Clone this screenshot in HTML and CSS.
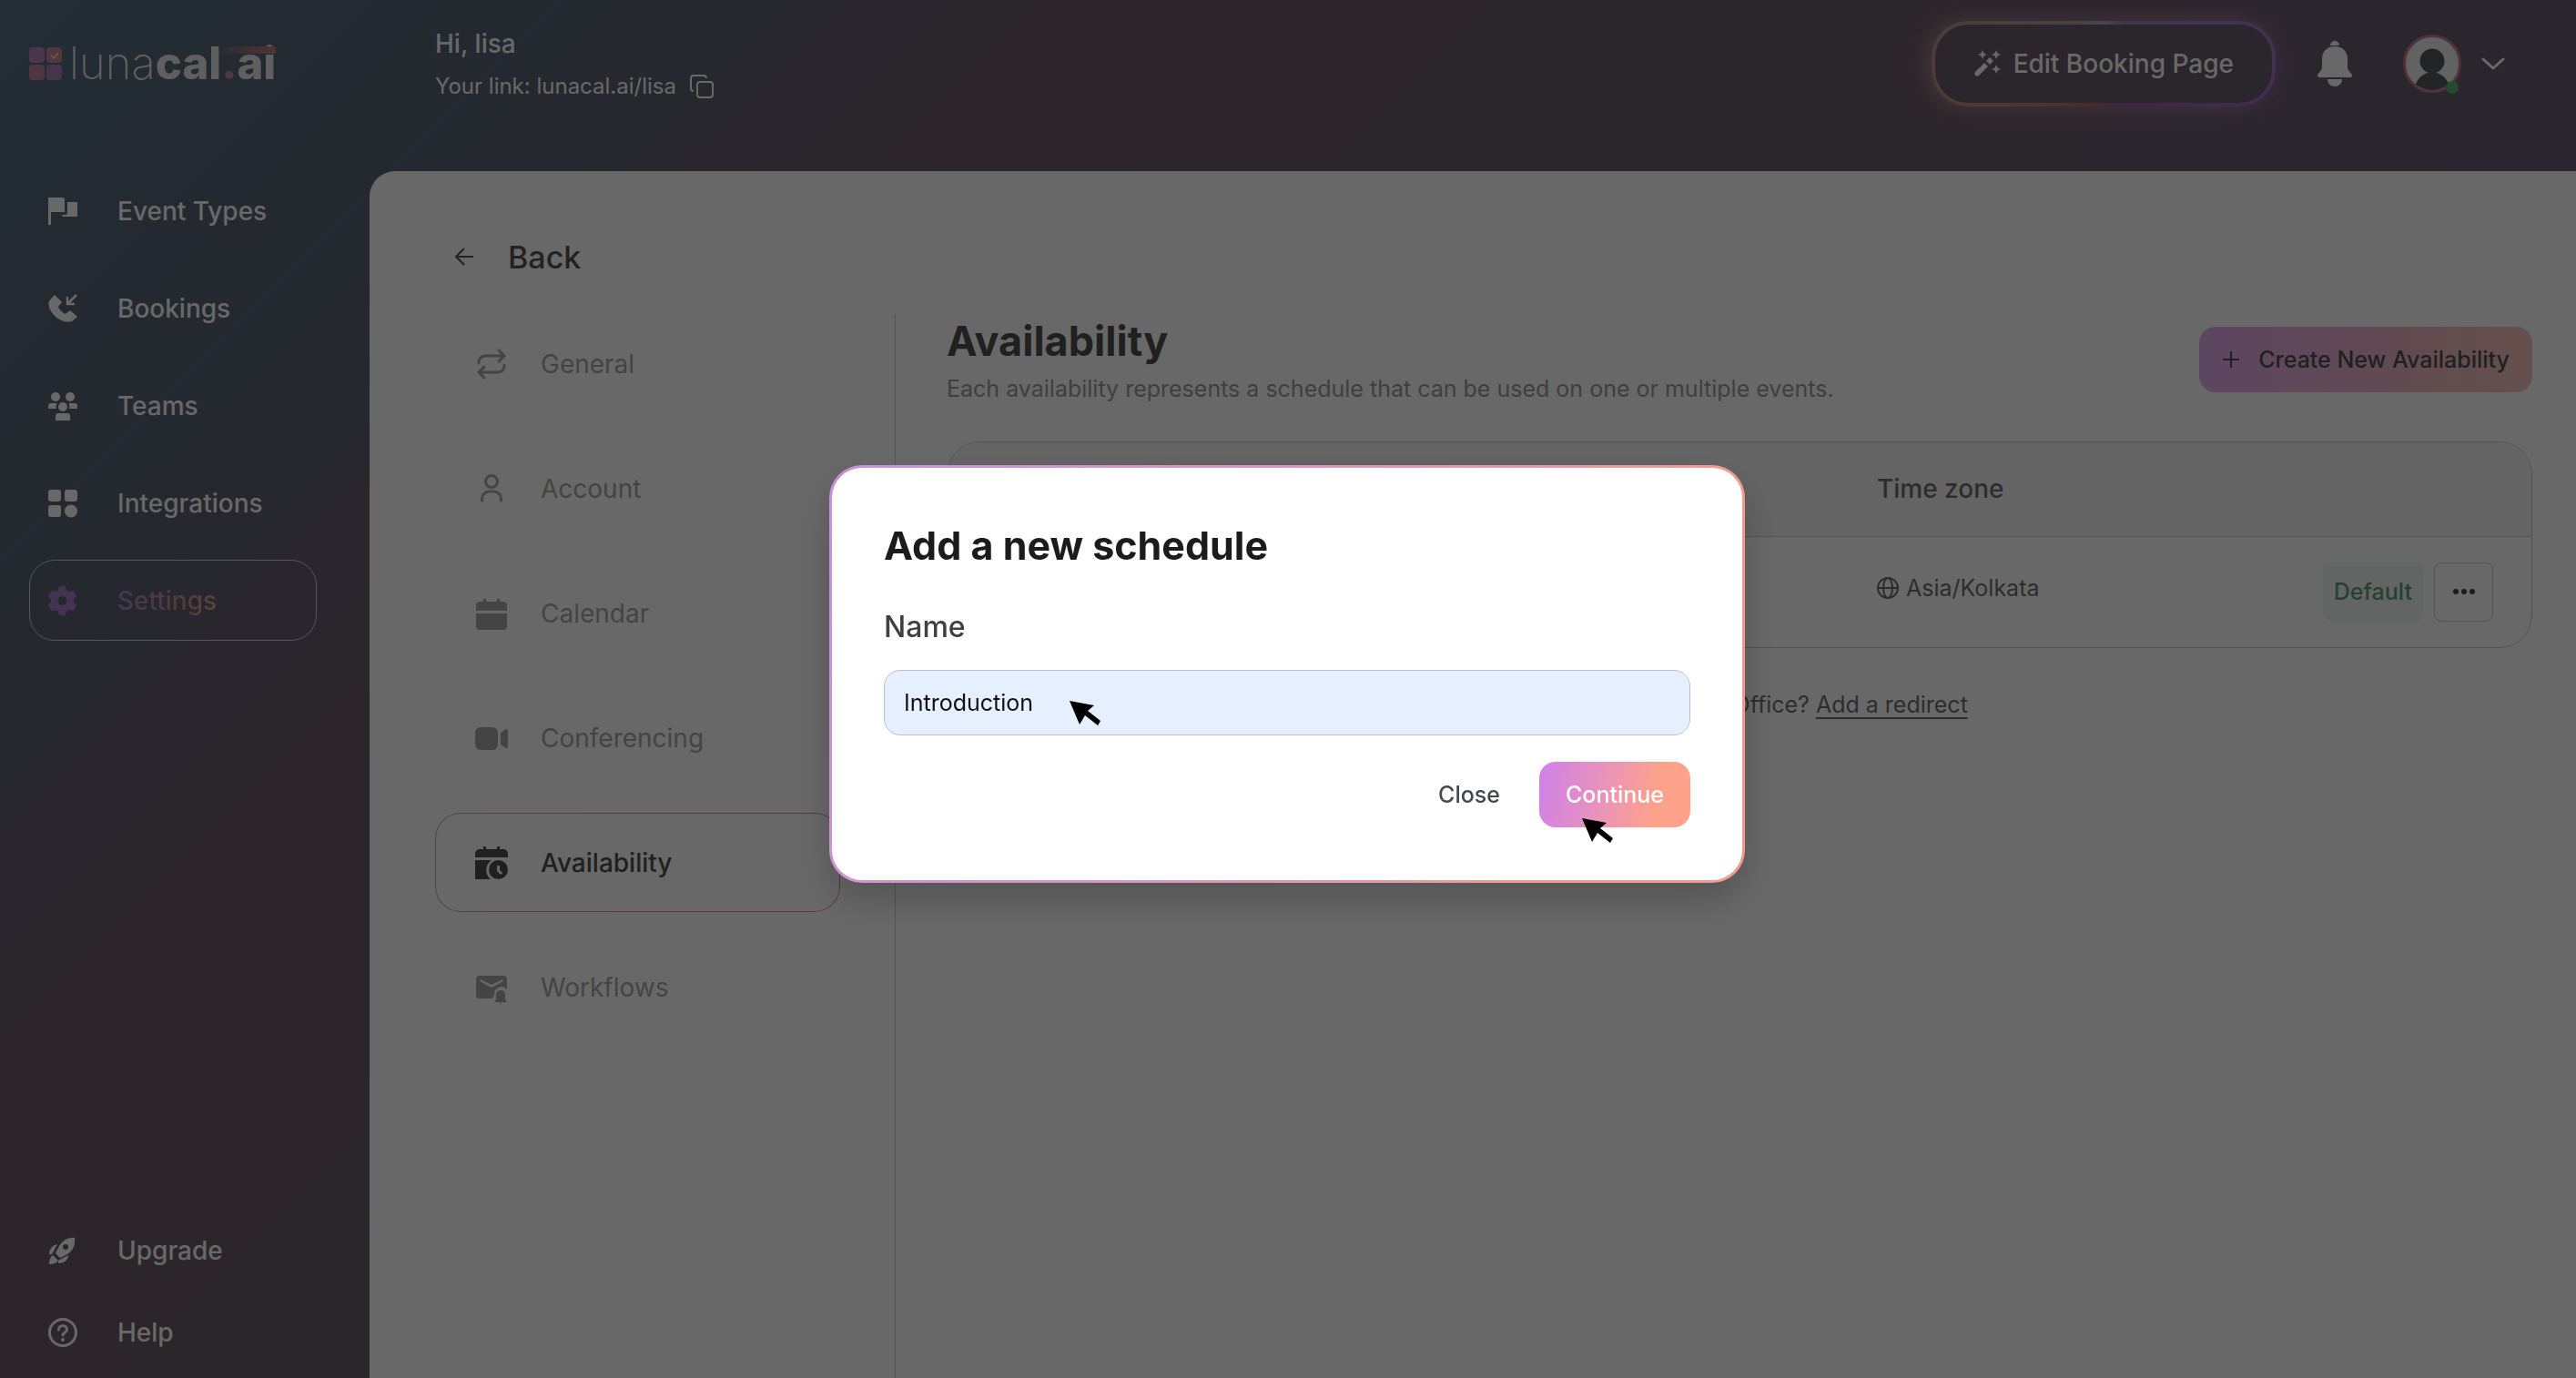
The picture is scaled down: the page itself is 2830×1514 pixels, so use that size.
FILE: index.html
```html
<!DOCTYPE html>
<html lang="en">
<head>
<meta charset="utf-8">
<title>Availability - lunacal.ai</title>
<meta name="viewport" content="width=device-width, initial-scale=1">
<link rel="stylesheet" href="styles.css">
</head>
<body>
<div class="app">
  <aside class="sidebar">
    <a class="logo" href="#" aria-label="lunacal.ai">
      <svg class="logo-mark" viewBox="0 0 36 36" aria-hidden="true">
        <rect x="0" y="0" width="17" height="17" rx="4" fill="#b985b8"/>
        <rect x="19" y="0" width="17" height="17" rx="4" fill="#c98a92"/>
        <rect x="0" y="19" width="17" height="17" rx="4" fill="#bf86a4"/>
        <rect x="19" y="19" width="17" height="17" rx="4" fill="#ad7fbd"/>
        <path d="M24 8.500l3 3.500 5-6" fill="none" stroke="#f0dce0" stroke-width="1.500"/>
      </svg>
      <span class="logo-text"><span class="logo-thin">luna</span><span class="logo-bold">cal<span class="logo-dot">.</span>ai</span><span class="logo-bar"></span></span>
    </a>
    <nav class="nav">
      <a class="nav-item" href="#">
        <svg class="nav-icon" viewBox="0 0 32 32" aria-hidden="true"><path d="M0 1h15a3 3 0 0 1 3 3v13H3v14H0z"/><path d="M21 6h11v16H17a2 2 0 0 1-2-2h4a2 2 0 0 0 2-2z"/></svg>
        Event Types</a>
      <a class="nav-item" href="#">
        <svg class="nav-icon" viewBox="0 0 32 32" aria-hidden="true"><path d="M7 1 1.500 7C-1 11 1 18 7 24s14 8 19 6l6-5-8-7-5 4c-3-1-7-5-8-8l4-5z"/><path d="M31 1 21 11M21 3v8h8" fill="none" stroke="currentColor" stroke-width="2.500"/></svg>
        Bookings</a>
      <a class="nav-item" href="#">
        <svg class="nav-icon" viewBox="0 0 32 32" aria-hidden="true"><circle cx="8" cy="6" r="5"/><circle cx="24" cy="6" r="5"/><circle cx="16" cy="17" r="5"/><path d="M3 13h6.500a7 7 0 0 0-.5 6H0v-3a3 3 0 0 1 3-3zM29 13h-6.500a7 7 0 0 1 .5 6h9v-3a3 3 0 0 0-3-3zM11 24h10a3 3 0 0 1 3 3v5H8v-5a3 3 0 0 1 3-3z"/></svg>
        Teams</a>
      <a class="nav-item" href="#">
        <svg class="nav-icon" viewBox="0 0 32 32" aria-hidden="true"><rect x="0" y="1" width="14" height="13" rx="3"/><rect x="18" y="1" width="14" height="13" rx="3"/><rect x="0" y="18" width="14" height="13" rx="3"/><circle cx="25" cy="24.500" r="7"/></svg>
        Integrations</a>
      <a class="nav-item nav-item-active" href="#">
        <svg class="nav-icon" viewBox="0 0 32 32" aria-hidden="true"><path fill-rule="evenodd" stroke="currentColor" stroke-width="2" stroke-linejoin="round" d="M13 1h5l1 4 4 2 4-1 3 5-3 3v4l3 3-3 5-4-1-4 2-1 4h-5l-1-4-4-2-4 1-3-5 3-3v-4l-3-3 3-5 4 1 4-2zM15.500 10a6 6 0 1 0 0 12 6 6 0 0 0 0-12z"/></svg>
        <span>Settings</span></a>
    </nav>
    <nav class="nav nav-bottom">
      <a class="nav-item" href="#">
        <svg class="nav-icon" viewBox="0 0 32 32" aria-hidden="true"><path fill-rule="evenodd" d="M29 2c-7-1-13 3-17 9l-4 8 5 5 8-4c6-4 9-10 8-18zM19 9a3 3 0 1 1 0 6 3 3 0 0 1 0-6z"/><path d="M10 9c-5 1-9 5-9 11h3zM22 21c0 5-4 9-11 9v-3zM5 21l6 6c-2 3-6 4-10 4 0-4 1-8 4-10z"/></svg>
        Upgrade</a>
      <a class="nav-item" href="#">
        <svg class="nav-icon" viewBox="0 0 32 32" aria-hidden="true"><g fill="none" stroke="currentColor" stroke-width="3" stroke-linecap="round"><circle cx="16" cy="16" r="14.500"/><path d="M11.500 13c0-6 9-6 9 0 0 3-4.500 3-4.500 6"/></g><circle cx="16" cy="24" r="2"/></svg>
        Help</a>
    </nav>
  </aside>

  <div class="column">
    <header class="topbar">
      <div class="greeting">
        <p class="hello">Hi, lisa</p>
        <p class="link-line">Your link: lunacal.ai/lisa
          <button class="icon-button" type="button" aria-label="Copy link"><svg class="copy-icon" viewBox="0 0 28 28" aria-hidden="true"><rect x="9" y="9" width="17" height="17" rx="3"/><path d="M5 19a3 3 0 0 1-3-3V5a3 3 0 0 1 3-3h11a3 3 0 0 1 3 3"/></svg></button>
        </p>
      </div>
      <div class="top-actions">
        <button class="edit-button" type="button">
          <svg class="wand-icon" viewBox="0 0 30 30" aria-hidden="true"><path d="M2 24 12 14l4 4L6 28c-3 2-6-1-4-4zM14 12l4-4 4 4-4 4zM10 0l1.500 3.500L15 5l-3.500 1.500L10 10 8.500 6.500 5 5l3.500-1.500zM25 0l1.500 3.500L30 5l-3.500 1.500L25 10l-1.500-3.500L20 5l3.500-1.500zM25 16l1.500 3.500L30 21l-3.500 1.500L25 26l-1.500-3.500L20 21l3.500-1.500z"/></svg>
          Edit Booking Page</button>
        <button class="icon-button" type="button" aria-label="Notifications"><svg class="bell-icon" viewBox="0 0 38 50" aria-hidden="true"><path d="M14 5a5 5 0 0 1 10 0zM19 6c9 0 14 6 14 14v9c0 4 5 6 5 9 0 1-1 2-2 2H2c-1 0-2-1-2-2 0-3 5-5 5-9v-9C5 12 10 6 19 6zM11 42h16c0 5-4 8-8 8s-8-3-8-8z"/></svg></button>
        <button class="profile-button" type="button" aria-label="Account menu">
          <svg class="avatar" viewBox="0 0 66 66" aria-hidden="true"><defs><clipPath id="avatar-clip"><circle cx="32" cy="33" r="29"/></clipPath></defs><circle cx="32" cy="33" r="30.500" fill="#eef2f2" stroke="#c87c8a" stroke-width="3"/><g clip-path="url(#avatar-clip)" fill="#54595c"><circle cx="32" cy="30" r="13.500"/><path d="M27 40h10v3c8 3 13 8 15 19H12c2-11 7-16 15-19z"/></g><circle cx="54" cy="59" r="7" fill="#5fb070"/></svg>
          <svg class="chevron" viewBox="0 0 26 16" aria-hidden="true"><path d="M2 3l11 10L24 3"/></svg>
        </button>
      </div>
    </header>

    <main class="panel">
      <a class="back" href="#"><svg class="back-icon" viewBox="0 0 20 20" aria-hidden="true"><path d="M20 10H2M10 1l-9 9 9 9"/></svg>Back</a>
      <div class="panel-body">
        <nav class="tabs">
          <a class="tab" href="#"><svg class="tab-icon" viewBox="0 0 36 36" aria-hidden="true"><g fill="none" stroke="currentColor" stroke-width="3" stroke-linecap="round" stroke-linejoin="round"><path d="M26 3l6 6-6 6M32 9H11a7 7 0 0 0-7 7v1M10 33l-6-6 6-6M4 27h21a7 7 0 0 0 7-7v-1"/></g></svg>General</a>
          <a class="tab" href="#"><svg class="tab-icon" viewBox="0 0 36 36" aria-hidden="true"><g fill="none" stroke="currentColor" stroke-width="3" stroke-linecap="round"><circle cx="18" cy="10" r="6.500"/><path d="M7.500 31v-2a8 8 0 0 1 8-8h5a8 8 0 0 1 8 8v2"/></g></svg>Account</a>
          <a class="tab" href="#"><svg class="tab-icon" viewBox="0 0 36 36" aria-hidden="true"><path d="M9 2h3v3h12V2h3v3h4a4 4 0 0 1 4 4v6H1V9a4 4 0 0 1 4-4h4zM1 18h34v14a4 4 0 0 1-4 4H5a4 4 0 0 1-4-4z"/></svg>Calendar</a>
          <a class="tab" href="#"><svg class="tab-icon" viewBox="0 0 36 36" aria-hidden="true"><rect x="0" y="6" width="25" height="25" rx="6"/><path d="M28 12l6-4c1 0 2 0 2 1v19c0 1-1 1-2 1l-6-4z"/></svg>Conferencing</a>
          <a class="tab tab-active" href="#"><svg class="tab-icon" viewBox="0 0 36 36" aria-hidden="true"><path d="M9 0h3v3h12V0h3v3h4a5 5 0 0 1 5 5v4H0V8a5 5 0 0 1 5-5h4zM0 15h18a13 13 0 0 0-1 21H0z"/><path fill-rule="evenodd" d="M25.500 15a10.500 10.500 0 1 0 0 21 10.500 10.500 0 0 0 0-21zM24 21h3v5l3 3-2 2-4-4z"/></svg>Availability</a>
          <a class="tab" href="#"><svg class="tab-icon" viewBox="0 0 36 36" aria-hidden="true"><path fill-rule="evenodd" d="M5 5h26a4 4 0 0 1 4 4v11a8 8 0 0 0-14 6l-2 4H5a4 4 0 0 1-4-4V9a4 4 0 0 1 4-4zM6 9l-1 2 13 7 13-7-1-2-12 6z"/><path d="M28 21c4 0 5 3 5 6v4l2 3H21l2-3v-4c0-3 1-6 5-6zM26 35h4l-2 1z"/></svg>Workflows</a>
        </nav>
        <section class="content">
          <div class="content-head">
            <div>
              <h1 class="title">Availability</h1>
              <p class="subtitle">Each availability represents a schedule that can be used on one or multiple events.</p>
            </div>
            <button class="create-button" type="button"><svg class="plus-icon" viewBox="0 0 20 20" aria-hidden="true"><path d="M10 1v18M1 10h18"/></svg>Create New Availability</button>
          </div>
          <div class="table-card">
            <table class="schedule-table">
              <thead><tr><th class="col-name" scope="col">Name</th><th scope="col">Time zone</th><th class="col-actions" scope="col"></th></tr></thead>
              <tbody><tr>
                <td>Working hours</td>
                <td><span class="zone"><svg class="globe-icon" viewBox="0 0 24 24" aria-hidden="true"><circle cx="12" cy="12" r="11"/><ellipse cx="12" cy="12" rx="5" ry="11"/><path d="M1 12h22"/></svg>Asia/Kolkata</span></td>
                <td><span class="row-actions"><span class="badge">Default</span><button class="more-button" type="button" aria-label="More"><svg class="more-icon" viewBox="0 0 24 6" aria-hidden="true"><circle cx="3" cy="3" r="3"/><circle cx="12" cy="3" r="3"/><circle cx="21" cy="3" r="3"/></svg></button></span></td>
              </tr></tbody>
            </table>
          </div>
          <p class="redirect">Temporarily out-of-Office? <a class="redirect-link" href="#">Add a redirect</a></p>
        </section>
      </div>
    </main>
  </div>
</div>

<div class="overlay">
  <form class="modal" role="dialog" aria-modal="true" aria-labelledby="modal-title">
    <h2 class="modal-title" id="modal-title">Add a new schedule</h2>
    <label class="field-label" for="schedule-name">Name</label>
    <input class="field" id="schedule-name" type="text" value="Introduction">
    <div class="modal-actions">
      <button class="close-button" type="button">Close</button>
      <button class="continue-button" type="button">Continue</button>
    </div>
    <svg class="cursor cursor-field" viewBox="0 0 34 27" aria-hidden="true"><path d="M0 0l27 5-7 6 14 11-3 5-14-11-6 10z"/></svg>
    <svg class="cursor cursor-continue" viewBox="0 0 34 27" aria-hidden="true"><path d="M0 0l27 5-7 6 14 11-3 5-14-11-6 10z"/></svg>
  </form>
</div>
</body>
</html>
```
FILE: styles.css
```css
* { box-sizing: border-box; }

body {
  margin: 0;
  font-family: Inter, "Liberation Sans", sans-serif;
  font-size: 28px;
  color: #555;
}

p, h1, h2 { margin: 0; }
a { color: inherit; text-decoration: none; }
button { font: inherit; color: inherit; border: 0; background: none; padding: 0; }
svg { display: block; flex: none; fill: currentColor; }

.app {
  display: flex;
  min-height: 100vh;
  background: linear-gradient(135deg, #557084 0%, #57677a 8%, #5b6275 16%, #665e6e 23%, #6b5c68 29%, #6b5e69 50%, #685e72 64%, #665f76 100%);
}

/* Sidebar */
.sidebar {
  flex: none;
  width: 406px;
  padding: 48px 58px 6px 32px;
  display: flex;
  flex-direction: column;
  color: #fff;
}

.logo { display: flex; align-items: center; gap: 8px; height: 44px; color: #e8e8e8; }
.logo-mark { width: 36px; height: 36px; }
.logo-text { position: relative; font-size: 49px; line-height: 44px; }
.logo-thin { font-weight: 200; }
.logo-bold { font-weight: 800; }
.logo-dot { color: #c088b4; }
.logo-bar { position: absolute; right: 0; top: 3px; width: 60px; height: 8px; border-radius: 0 2px 2px 0; background: linear-gradient(90deg, #6d6a85, #c8807c); }

.nav { display: flex; flex-direction: column; gap: 18px; margin-top: 95px; }
.nav-bottom { gap: 1px; margin-top: auto; }
.nav-item {
  display: flex;
  align-items: center;
  gap: 44px;
  height: 89px;
  padding: 0 20px;
  border: 1px solid transparent;
  border-radius: 28px;
  font-weight: 500;
}
.nav-icon { width: 32px; height: 32px; }
.nav-item-active { border-color: #d4d4dc; color: #a87cc8; }
.nav-item-active span { color: transparent; background: linear-gradient(90deg, #a886cc, #cc9094 60%, #e0a094); background-clip: text; -webkit-background-clip: text; }

/* Top bar */
.column { flex: 1; min-width: 0; display: flex; flex-direction: column; }
.topbar { display: flex; justify-content: space-between; height: 188px; padding: 0 78px 0 72px; color: #fff; }
.greeting { padding-top: 28px; }
.hello { font-size: 28px; line-height: 40px; font-weight: 500; }
.link-line { display: flex; align-items: center; gap: 14px; font-size: 24px; line-height: 54px; }
.copy-icon { width: 28px; height: 28px; fill: none; stroke: currentColor; stroke-width: 2; }
.top-actions { display: flex; align-items: center; height: 140px; gap: 46px; }
.edit-button {
  display: flex;
  align-items: center;
  gap: 14px;
  height: 94px;
  padding: 0 42px;
  border: 4px solid transparent;
  border-radius: 40px;
  background: linear-gradient(#695e6a, #695e6a) padding-box, conic-gradient(from 0deg, #b0b0b4, #9a80bc 8%, #a078cc 25%, #9a5cba 36%, #96609a 48%, #b57052 57%, #c09088 72%, #b0a0a0 90%, #b0b0b4) border-box;
  box-shadow: -6px 0 24px rgba(200, 160, 140, 0.6), 6px 0 24px rgba(140, 90, 190, 0.5);
  font-weight: 500;
}
.wand-icon { width: 30px; height: 30px; }
.bell-icon { width: 38px; height: 50px; }
.profile-button { display: flex; align-items: center; gap: 20px; margin-left: 10px; }
.avatar { width: 66px; height: 66px; }
.chevron { width: 26px; height: 16px; fill: none; stroke: currentColor; stroke-width: 3; stroke-linecap: round; stroke-linejoin: round; }

/* Panel */
.panel { flex: 1; display: flex; flex-direction: column; padding: 68px 48px 0 72px; background: #fff; border-radius: 28px 0 0 0; }
.back { display: flex; align-items: center; gap: 38px; padding-left: 22px; height: 52px; font-size: 34px; font-weight: 500; color: #555; }
.back-icon { width: 20px; height: 20px; fill: none; stroke: currentColor; stroke-width: 2; }
.panel-body { flex: 1; display: flex; margin-top: 37px; }
.tabs { flex: none; width: 506px; padding-right: 60px; display: flex; flex-direction: column; gap: 28px; border-right: 1px solid #d0d0d0; }
.tab { display: flex; align-items: center; gap: 36px; height: 109px; padding: 0 43px; border: 1px solid transparent; border-radius: 28px; color: #a8a8a8; }
.tab-icon { width: 36px; height: 36px; }
.tab-active {
  color: #505050;
  font-weight: 500;
  background: linear-gradient(#fff, #fff) padding-box, linear-gradient(90deg, #b8b0b8, #d0949c 50%) border-box;
}

.content { flex: 1; min-width: 0; padding-left: 56px; }
.content-head { display: flex; justify-content: space-between; align-items: flex-start; height: 140px; }
.title { font-size: 45px; line-height: 60px; font-weight: 700; color: #505050; }
.subtitle { font-size: 25px; line-height: 44px; color: #9c9c9c; }
.create-button {
  display: flex;
  align-items: center;
  gap: 20px;
  height: 72px;
  margin-top: 14px;
  padding: 0 25px;
  border-radius: 18px;
  background: linear-gradient(90deg, #e4acee, #ecb4cc 50%, #f4c4b8);
  font-size: 25px;
  font-weight: 500;
  color: #505050;
}
.plus-icon { width: 20px; height: 20px; fill: none; stroke: currentColor; stroke-width: 2; }
.table-card { border: 1px solid #c8c8c8; border-radius: 36px; overflow: hidden; }
.schedule-table { width: 100%; border-collapse: collapse; table-layout: fixed; }
.schedule-table th { height: 103px; padding: 0 42px; background: #f4f4f4; border-bottom: 1px solid #c8c8c8; text-align: left; font-weight: 500; color: #707070; }
.schedule-table td { height: 122px; padding: 0 42px; font-size: 25px; color: #707070; }
.schedule-table .col-name { width: 979px; }
.schedule-table .col-actions { width: 340px; }
.zone { display: flex; align-items: center; gap: 8px; padding-bottom: 8px; }
.globe-icon { width: 24px; height: 24px; fill: none; stroke: currentColor; stroke-width: 2; }
.row-actions { display: flex; justify-content: flex-end; align-items: center; gap: 12px; }
.badge { padding: 0 12px; line-height: 64px; border-radius: 8px; background: #f0f8f4; color: #5f9c7c; font-weight: 500; }
.more-button { display: grid; place-items: center; width: 65px; height: 65px; border: 1px solid #c8c8c8; border-radius: 8px; color: #444; }
.more-icon { width: 24px; height: 6px; }
.redirect { padding: 40px 0 0 632px; font-size: 25px; line-height: 44px; color: #707070; }
.redirect-link { text-decoration: underline; text-underline-offset: 5px; }

/* Modal */
.overlay { position: fixed; inset: 0; display: flex; align-items: center; justify-content: center; padding: 0 2px 34px 0; background: rgba(0, 0, 0, 0.592); }
.modal {
  position: relative;
  width: 1006px;
  padding: 53px 57px 58px;
  border: 3px solid transparent;
  border-radius: 36px;
  background: linear-gradient(#fff, #fff) padding-box, linear-gradient(115deg, #c98fe0, #d795c4 40%, #f39a90 80%) border-box;
  box-shadow: 0 20px 40px rgba(0, 0, 0, 0.2);
}
.modal-title { font-size: 43px; line-height: 64px; font-weight: 700; color: #1c1c1c; }
.field-label { display: block; margin-top: 34px; font-size: 32px; line-height: 48px; font-weight: 500; color: #404040; }
.field { display: block; width: 100%; height: 72px; margin-top: 23px; padding: 0 21px; border: 1px solid #b8c0d4; border-radius: 18px; background: #e6effe; font: inherit; font-size: 25px; color: #111; }
.modal-actions { display: flex; justify-content: flex-end; gap: 14px; margin-top: 29px; font-size: 25px; }
.close-button { height: 72px; padding: 0 29px; font-weight: 500; color: #444850; }
.continue-button { height: 72px; padding: 0 29px; border-radius: 18px; background: linear-gradient(100deg, #cf80ea, #e892bc 40%, #fea28c 75%); font-weight: 500; color: #fff; }
.cursor { position: absolute; width: 34px; height: 27px; fill: #000; }
.cursor-field { left: 261px; top: 256px; }
.cursor-continue { right: 142px; bottom: 41px; }
```
